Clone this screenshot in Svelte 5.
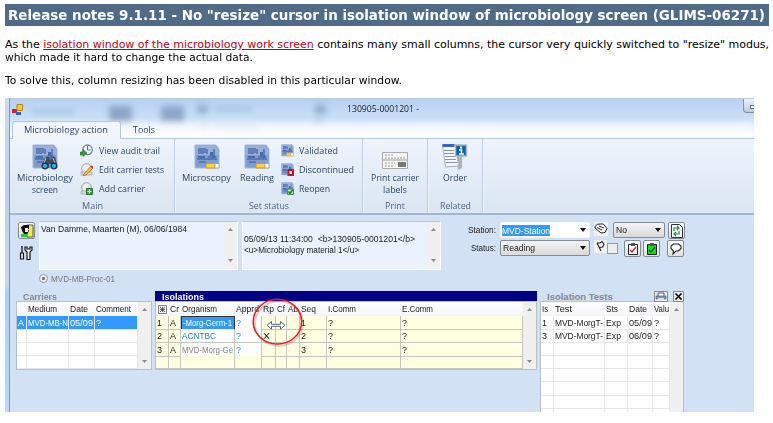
<script>
  function fit(node, width) {
    const natural = node.getBoundingClientRect().width;
    node.style.transform = `scaleX(${width / natural})`;
    node.style.marginRight = width - natural + 'px';
  }

  const carriers = [['A', 'MVD-MB-N', '05/09', '?'], [], [], []];
  const isolations = [
    ['1', 'A', '-Morg-Germ-1', '?', '', '', '', '1', '?', '?'],
    ['2', 'A', 'ACNTBC', '?', 'X', '', '', '2', '?', '?'],
    ['3', 'A', 'MVD-Morg-Ge', '?', '', '', '', '3', '?', '?'],
    []
  ];
  const cellWidths = { 'MVD-MB-N': 40, '05/09': 23, '06/09': 23, '-Morg-Germ-1': 49, ACNTBC: 34, 'MVD-Morg-Ge': 51, 'MVD-MorgT-': 48, Exp: 15, X: 7, A: 6, '?': 5 };
  const isoHead = [['Cr', 9], ['Organism', 35], ['Apprd', 23], ['Rp', 11], ['Cf', 8], ['Ab', 10], ['Seq', 15], ['I.Comm', 28], ['E.Comm', 31]];
  const tests = [['1', 'MVD-MorgT-', 'Exp', '05/09', '?'], ['3', 'MVD-MorgT-', 'Exp', '06/09', '?'], [], [], [], [], [], []];
  const testHead = [['Is', 6], ['Test', 17], ['Sts', 12], ['Date', 18], ['Valu', 15]];
  const cols = (n) => Array.from({ length: n }, (_, i) => i);
</script>

{#snippet t(text, w)}<span class="t" use:fit={w}>{text}</span>{/snippet}

{#snippet cell(text)}{#if text}{@render t(text, cellWidths[text] ?? 5)}{/if}{/snippet}

{#snippet plate(size, badge)}
  <svg width={size} height={size} viewBox="0 0 26 26">
    <path d="M1 1H22L25 5V24H1Z" fill="#7f9ccf" stroke="#a9b9da" />
    <path d="M2 2H21L24 5V11H2Z" fill="#a1b7e0" opacity=".75" />
    <path d="M5 4V10M7 4V10M9 4V10M11 4V9M13 5V10M17 9V12M20 5V14M3 15H23M5 18H12M14 13H22" stroke="#355899" stroke-width="1.1" />
    <path d="M16 8h3v4h-3zM4 12h7v2H4z" fill="#456cad" />
    {#if badge === 'yellow'}
      <path d="M12 19.500H21V24H12Z" fill="#ffd338" stroke="#d19b12" /><path d="M21 19.500H25V24H21Z" fill="#fff" stroke="#aaa" />
    {:else if badge === 'small'}
      <path d="M11 18H20V24H11Z" fill="#ffd338" stroke="#d19b12" /><path d="M20 18H25V24H20Z" fill="#fff" stroke="#aaa" />
    {:else if badge === 'stop'}
      <path d="M15 14H24V24H15Z" fill="#fff" stroke="#d80f1d" stroke-width="4" />
    {:else if badge === 'ok'}
      <path d="M13 14H25V25H13Z" fill="#b5dfad" stroke="#3d9742" stroke-width="2" /><path d="M15 19l3 4 6-8" fill="none" stroke="#218032" stroke-width="3" />
    {:else}
      <path d="M10 20L14 13H17L18 16H19L20 13H23L25 20V24H19V20H17V24H10Z" fill="#424b58" />
      <path d="M14 14l-2 5M21 14l2 5" stroke="#bdc4cc" /><circle cx="13" cy="22" r="2.8" fill="#29aee7" stroke="#233447" stroke-width="1.3" /><circle cx="22" cy="22" r="2.8" fill="#29aee7" stroke="#233447" stroke-width="1.3" />
    {/if}
  </svg>
{/snippet}

{#snippet scroll(h)}
  <div class="scroll"><svg width="13" height={h}><path d="M4 9l2.5-3L9 9z" fill="#8b8b8b" />{#if h < 90}<path d={`M4 ${h - 9}l2.5 3 2.5-3z`} fill="#8b8b8b" />{/if}</svg></div>
{/snippet}

{#snippet caret()}<svg class="caret" width="8" height="6"><path d="M1 1h6L4 5z" fill="#111" /></svg>{/snippet}

<main>
  <h1>{@render t('Release notes 9.1.11 - No "resize" cursor in isolation window of microbiology screen (GLIMS-06271)', 757)}</h1>
  <p class="just">As the <a href="#isolation">isolation window of the microbiology work screen</a> contains many small columns, the cursor very quickly switched to "resize" modus,</p>
  <p>{@render t('which made it hard to change the actual data.', 248)}</p>
  <p class="second">{@render t('To solve this, column resizing has been disabled in this particular window.', 397)}</p>

  <div class="shot">
    <div class="edge"></div>
    <div class="window">
      <header>
        <svg class="haze" width="744" height="40">
          <defs><filter id="b" x="-30%" y="-50%" width="160%" height="200%"><feGaussianBlur stdDeviation="3" /></filter></defs>
          <g filter="url(#b)">
            <path d="M99 7h23v16h-23zM151 7h23v16h-23z" fill="#53729d" opacity=".5" />
            <path d="M187 6h11v8h-11zM305 6h11v9h-11z" fill="#53729d" opacity=".45" />
            <path d="M205 8h37v4h-37zM204 26h45v4h-45zM22 11h42v4h-42zM304 20h10v4h-10z" fill="#7899bd" opacity=".4" />
            <path d="M190 24h8v7h-8z" fill="#c798a8" opacity=".35" />
            <path d="M0 25h744v18H0z" fill="#fff" opacity=".65" />
          </g>
        </svg>
        <div class="titlebar">
          <svg width="11" height="11"><path d="M0 5h5v4H0z" fill="#d72220" /><path d="M5 .5h5.500v6H5z" fill="#ffc72a" stroke="#b98410" /><path d="M4 8h5v3H4z" fill="#2667c5" /></svg>
          <div class="caption">{@render t('130905-0001201 -', 72)}</div>
          <div class="min"><i></i></div>
        </div>
        <div class="tabs"><div class="tab on">{@render t('Microbiology action', 84)}</div><div class="tab">{@render t('Tools', 22)}</div></div>
      </header>

      <section class="ribbon">
        <div class="group main">
          <div class="tools">
            <div class="big b1">{@render plate(26, 'glass')}{@render t('Microbiology', 56)}{@render t('screen', 26)}</div>
            <div class="list">
              <div><svg width="13" height="13"><circle cx="7.5" cy="5.8" r="4.8" fill="#f5f8ff" stroke="#7b8799" stroke-width="1.3" /><path d="M7.5 2v4h3" fill="none" stroke="#3d70c4" /><path d="M0 8h3V5.500l4 3.500-4 3.500V11H0z" fill="#329e35" stroke="#246b2a" stroke-width=".6" /></svg>{@render t('View audit trail', 61)}</div>
              <div><svg width="13" height="13"><circle cx="6.5" cy="5.5" r="4.8" fill="#eceded" stroke="#9ca0a4" /><path d="M1 9h11v3H1z" fill="#d9dcdf" stroke="#9ca0a4" stroke-width=".7" /><path d="M4 11l7-8 2 2-7 7-3 1z" fill="#ffba34" stroke="#a06e25" stroke-width=".7" /><path d="M11 3l2 2" stroke="#d73427" stroke-width="2" /></svg>{@render t('Edit carrier tests', 65)}</div>
              <div><svg width="13" height="13"><circle cx="6.5" cy="5.5" r="4.8" fill="#eceded" stroke="#9ca0a4" /><path d="M1 9h7v3H1z" fill="#d9dcdf" stroke="#9ca0a4" stroke-width=".7" /><path d="M6.5 6.5h6v6h-6z" fill="#3ea144" stroke="#226e2b" /><path d="M9.5 7.5v4M7.5 9.5h4" stroke="#fff" stroke-width="1.2" /></svg>{@render t('Add carrier', 46)}</div>
            </div>
          </div>
          <footer>{@render t('Main', 21)}</footer>
        </div>
        <div class="group status">
          <div class="tools">
            <div class="big b2">{@render plate(26, 'yellow')}{@render t('Microscopy', 49)}</div>
            <div class="big b3">{@render plate(26, 'yellow')}{@render t('Reading', 34)}</div>
            <div class="list">
              <div>{@render plate(13, 'small')}{@render t('Validated', 39)}</div>
              <div>{@render plate(13, 'stop')}{@render t('Discontinued', 55)}</div>
              <div>{@render plate(13, 'ok')}{@render t('Reopen', 31)}</div>
            </div>
          </div>
          <footer>{@render t('Set status', 40)}</footer>
        </div>
        <div class="group print">
          <div class="tools"><div class="big b4">
            <svg width="26" height="26"><path d="M.5 8.500h25v16H.5z" fill="#f6f6f3" stroke="#aaa" /><path d="M1 16h24" stroke="#999" /><path d="M3 11h8M3 14h12M15 14h8M3 19h10M3 22h8" stroke="#999" stroke-dasharray="2 1" /><path d="M17 18v5M19 18v5M21 18v5M23 18v5" stroke="#444" stroke-width="1.4" /></svg>
            {@render t('Print carrier', 48)}{@render t('labels', 24)}</div></div>
          <footer>{@render t('Print', 20)}</footer>
        </div>
        <div class="group related">
          <div class="tools"><div class="big b4">
            <svg width="26" height="26"><path d="M14 4l6-1v21l-4 2z" fill="#8c9299" opacity=".65" /><path d="M.5 1l13-1 3 22-13 1z" fill="#f5f7fa" stroke="#a9afb8" /><path d="M.5 0h12v3H.5z" fill="#3567c4" /><path d="M2 6.500h10M2 9.500h10M3 12.500h11M3 15.500h11M4 18.500h11" stroke="#8792a3" /><path d="M13.500 1h11v11h-11z" fill="#0765a7" stroke="#aeb8c2" stroke-width="1.5" /><circle cx="19" cy="3.500" r="1.200" fill="#fff" /><path d="M17 6h2.500v4M17 10h5" fill="none" stroke="#fff" stroke-width="1.500" /></svg>
            {@render t('Order', 24)}</div></div>
          <footer>{@render t('Related', 31)}</footer>
        </div>
      </section>

      <section class="body">
        <div class="form">
          <div class="side">
            <button aria-label="Patient"><svg width="14" height="14"><path d="M7 1h6v12H7z" fill="#f4ec42" stroke="#555" /><path d="M1 3l3-2h5v4H8l1 2-2 3H4L2 7z" fill="#111" /><path d="M5 4h3v4H5z" fill="#fff" /><path d="M1 10h6v3H1z" fill="#28c53b" /></svg></button>
            <svg width="14" height="15"><path d="M3 0v7" stroke="#151515" stroke-width="1.300" /><path d="M1.500 7h3v6h-3z" fill="#eee" stroke="#151515" stroke-width="1.200" /><path d="M6 1v3l2 2v7.500h3V6l2-2V1l-2 0v2H8V1z" fill="#eee" stroke="#151515" stroke-width="1.200" /></svg>
          </div>
          <div class="patient">
            <div class="area"><div class="txt">{@render t('Van Damme, Maarten (M), 06/06/1984', 146)}</div>{@render scroll(46)}</div>
            <div class="proc"><i></i>{@render t('MVD-MB-Proc-01', 64)}</div>
          </div>
          <div class="area material"><div class="txt"><div>{@render t('05/09/13 11:34:00  <b>130905-0001201</b>', 171)}</div><div>{@render t('<u>Microbiology material 1</u>', 115)}</div></div>{@render scroll(46)}</div>
          <div class="station">
            <div class="row">
              <label for="st">{@render t('Station:', 28)}</label>
              <div class="select white" id="st"><mark>{@render t('MVD-Station', 48)}</mark>{@render caret()}</div>
              <svg class="ico" width="14" height="14"><path fill="#f1f1f1" d="M0 0h14v14H0z" /><path d="M1 4.500q2-3 5-2.500 4-1 5 2l2 2.500-2 4-4 .5-6-5zM3 5.500l5 2.500M5 4l5 2" fill="#fff" stroke="#222" stroke-width="1" /></svg>
              <div class="select no">{@render t('No', 11)}{@render caret()}</div>
              <button class="ref" aria-label="Refresh"><svg width="13" height="14"><path d="M1.500.5h8l3 3v10h-11z" fill="#fff" stroke="#333" /><path d="M4 7V4h5M7 2l2 2-2 2M9 7v3H4M6 8l-2 2 2 2" fill="none" stroke="#169331" stroke-width="1.2" /></svg></button>
            </div>
            <div class="row r2">
              <label for="su">{@render t('Status:', 25)}</label>
              <div class="select" id="su">{@render t('Reading', 32)}{@render caret()}</div>
              <svg class="ico" width="13" height="13"><path fill="#f1f1f1" d="M0 0h13v13H0z" /><path d="M3 3l4 8M3 3l3 0 2-1.500 2 3-1.500 2.500-3 .5" fill="none" stroke="#222" stroke-width="1.1" /></svg>
              <i class="check"></i>
              <button class="c1" aria-label="Check"><svg width="12" height="13"><path d="M1.500 2.500h9v10h-9z" fill="#fff" stroke="#222" /><path d="M4 1h4v3H4z" fill="#555" /><path d="M3 8l2 2 4-5" fill="none" stroke="#d22" stroke-width="1.4" /></svg></button>
              <button class="c2" aria-label="Validate"><svg width="12" height="13"><path d="M1.500 2.500h9v10h-9z" fill="#0ae21c" stroke="#222" /><path d="M4 1h4v3H4z" fill="#555" /><path d="M3 8l2 2 4-5" fill="none" stroke="#115018" stroke-width="1.4" /></svg></button>
              <button class="c3" aria-label="Comment"><svg width="14" height="13"><path d="M4.500 2h5l2.500 2v2.500L9.500 9H7l-3 3 .5-3L2 6.500V4z" fill="#fff" stroke="#222" stroke-width="1.1" /></svg></button>
            </div>
          </div>
        </div>

        <div class="grids">
          <div class="carriers">
            <div class="gt">{@render t('Carriers', 34)}</div>
            <div class="frame">
              <div class="rows">
                <div class="r head"><b></b><b>{@render t('Medium', 29)}</b><b>{@render t('Date', 18)}</b><b>{@render t('Comment', 35)}</b></div>
                {#each carriers as c, i}<div class="r" class:sel={i === 0}>{#each cols(4) as j}<b>{@render cell(c[j])}</b>{/each}</div>{/each}
              </div>
              {@render scroll(67)}
            </div>
          </div>

          <div class="iso">
            <div class="gt navy">{@render t('Isolations', 42)}</div>
            <div class="frame">
              <div class="rows">
                <div class="r head"><b><svg width="9" height="9"><path d="M.5.5h8v8h-8z" fill="#eee" stroke="#777" stroke-width=".9" /><path d="M2 2l5 5M7 2L2 7M4.500 2v5M2 4.500h5" stroke="#555" stroke-width=".9" /></svg></b>{#each isoHead as [h, w]}<b>{@render t(h, w)}</b>{/each}</div>
                {#each isolations as c, i}<div class="r d{i}">{#each cols(10) as j}<b class="k{j}">{@render cell(c[j])}</b>{/each}</div>{/each}
              </div>
              {@render scroll(67)}
            </div>
          </div>

          <div class="tests">
            <div class="gt"><span>{@render t('Isolation Tests', 66)}</span>
              <svg class="pr" width="14" height="11"><path d="M.5.5h13v10H.5z" fill="#eef0f2" stroke="#888" /><path d="M4 5V2h6v3" fill="#fff" stroke="#557" /><path d="M2 5h10v3H2z" fill="#8298b8" stroke="#456" stroke-width=".6" /><path d="M4 7h6v2H4z" fill="#cfe2fa" /></svg>
              <svg width="11" height="11"><path d="M.5.5h10v10H.5z" fill="#eee" stroke="#888" /><path d="M2.500 2.500l6 6M8.500 2.500l-6 6" stroke="#000" stroke-width="1.700" /></svg>
            </div>
            <div class="frame">
              <div class="rows">
                <div class="r head">{#each testHead as [h, w]}<b>{@render t(h, w)}</b>{/each}</div>
                {#each tests as c}<div class="r">{#each cols(5) as j}<b>{@render cell(c[j])}</b>{/each}</div>{/each}
              </div>
              {@render scroll(123)}
            </div>
          </div>
        </div>
      </section>
    </div>

    <svg class="marker" width="60" height="56" viewBox="247 294 60 56">
      <ellipse cx="279" cy="323.500" rx="24" ry="22.200" fill="none" stroke="#555" stroke-width="2" opacity=".25" />
      <ellipse cx="277.400" cy="321.700" rx="24.200" ry="22.400" fill="none" stroke="#f01820" stroke-width="1.500" />
      <path d="M267 325.300l4.500-3.800v2.800h9v-2.800l4.500 3.800-4.500 3.800v-2.800h-9v2.800z" fill="#fff" stroke="#4b5370" stroke-width=".9" />
    </svg>
  </div>
</main>

<style>
  :global(body) { background: #fff; }
  main { width: 764px; height: 423px; box-sizing: border-box; padding-top: 4px; margin-left: 5px; overflow: hidden; font-family: "DejaVu Sans", Verdana, sans-serif; color: #000; }
  svg { display: block; flex: none; }
  .t { display: inline-block; white-space: pre; flex: none; transform-origin: 0 50%; }
  h1 { margin: 0 0 12px; height: 22px; line-height: 22px; padding-left: 3px; background: #506b87; color: #fff; font-size: 14px; font-weight: bold; white-space: nowrap; overflow: hidden; }
  p { margin: 0; font-size: 11px; line-height: 13px; height: 13px; white-space: nowrap; }
  .just { white-space: normal; text-align: justify; text-align-last: justify; letter-spacing: -.03px; }
  p.second { margin-top: 10px; }
  a { color: #c00018; }
  .shot { position: relative; display: flex; width: 749px; height: 314px; margin-top: 11px; overflow: hidden; font: 9.5px/12px "Liberation Sans", Arial, sans-serif; color: #1b1b1b; }
  .edge { width: 4px; border-right: 1px solid #8097b5; background: linear-gradient(#c9dcf2, #bdd2ea 30%, #c5d8ee 59%, #a8d4f8 62%, #b8daf5); }
  .window { width: 744px; display: flex; flex-direction: column; }
  header { position: relative; height: 41px; background: linear-gradient(#b5d2f2, #c8def5 45%, #f5f9fd 90%); border-top: 1px solid #bdc9d8; box-sizing: border-box; font-family: "Open Sans", "Noto Sans", sans-serif; }
  .haze { position: absolute; left: 0; top: 0; }
  .titlebar { position: relative; display: flex; height: 22px; padding-left: 2px; }
  .titlebar > svg { margin-top: 5px; }
  .caption { margin-left: 324px; margin-top: 4px; color: #222; }
  .min { margin-left: auto; width: 10px; height: 13px; border: 1px solid #8393a7; border-width: 0 0 1px 1px; border-radius: 0 0 0 4px; background: linear-gradient(#eef4fb, #bacbdf); }
  .min i { display: block; width: 4px; height: 2px; margin: 6px 0 0 6px; border: 1px solid #626b78; border-right: 0; background: #fff; }
  .tabs { position: relative; display: flex; height: 18px; border-bottom: 1px solid #b2c7de; box-sizing: border-box; }
  .tab { height: 18px; padding: 3px 12px 0; color: #2f4666; box-sizing: border-box; }
  .on { margin-left: 2px; width: 109px; padding: 2px 11px 0; border: 1px solid #b2c7de; border-bottom: 0; border-radius: 3px 3px 0 0; background: #f1f6fd; }
  .ribbon { display: flex; box-sizing: border-box; height: 76px; border-bottom: 2px solid #a3b7cf; background: linear-gradient(#edf4fc, #e5edf8 42%, #dae6f2); color: #2f4666; font-family: "Open Sans", "Noto Sans", sans-serif; }
  .group { box-sizing: border-box; border-right: 1px solid #bccde0; box-shadow: 1px 0 #eff5fb; display: flex; flex-direction: column; }
  .main { width: 165px; } .status { width: 188px; } .print { width: 65px; } .related { width: 55px; }
  .tools { display: flex; height: 61px; }
  .group footer { text-align: center; color: #506582; line-height: 12px; height: 13px; }
  .big { display: flex; flex-direction: column; align-items: center; padding-top: 5px; box-sizing: border-box; line-height: 12px; }
  .big svg { margin-bottom: 2px; }
  .b1 { width: 70px; } .b2 { width: 63px; } .b3 { width: 38px; } .b4 { width: 100%; }
  .status .list { margin-left: 5px; }
  .list { display: flex; flex-direction: column; padding-top: 2px; }
  .list > div { display: flex; gap: 5px; align-items: center; height: 19px; }
  .main .list > div { gap: 6px; }
  .body { height: 197px; background: #d3e1f5; display: flex; flex-direction: column; overflow: hidden; }
  .form { display: flex; flex: none; height: 76px; box-sizing: border-box; padding: 6px 0 0 8px; }
  .side { width: 21px; padding-top: 1px; }
  .side > svg { margin: 7px 0 0 1px; }
  button { display: flex; align-items: center; justify-content: center; flex: none; width: 17px; height: 17px; padding: 0; border: 1px solid #858b92; border-radius: 2px; background: linear-gradient(#fff, #e0e0e0); box-sizing: border-box; }
  .area { display: flex; justify-content: space-between; box-sizing: border-box; width: 199px; height: 49px; border: 1px solid #fafcff; border-top-color: #bcc4d0; background: #eaf3fd; }
  .txt { padding: 1px 0 0 1px; }
  .scroll { width: 13px; flex: none; background: #f0f0f1; }
  .material { margin-left: 4px; }
  .material .txt { padding-top: 12px; line-height: 10.5px; }
  .material .txt div { height: 10.5px; }
  .proc { display: flex; align-items: center; gap: 3px; height: 17px; color: #777; }
  .proc i { width: 7px; height: 7px; border: 1px solid #999; border-radius: 50%; background: radial-gradient(#777 0 25%, #eee 40%); }
  .station { margin-left: 27px; }
  .row { display: flex; height: 18px; padding-top: 1px; box-sizing: border-box; }
  .row label { width: 28px; text-align: right; line-height: 16px; }
  .select { display: flex; align-items: center; justify-content: space-between; box-sizing: border-box; width: 90px; height: 16px; margin-left: 4px; padding: 0 2px; border: 1px solid #858b92; border-radius: 2px; background: linear-gradient(#f4f4f4, #d9d9d9); }
  .white { background: #fff; border-color: #f4f8ff; padding-left: 1px; }
  mark { background: #3399ff; color: #fff; height: 11px; line-height: 11px; display: flex; }
  .ico { margin-left: 4px; }
  .no { width: 52px; margin-left: 5px; }
  .ref { margin-left: 3px; }
  .check { width: 9px; height: 9px; border: 1px solid #999; background: #eee; margin-top: 3px; }
  .c1 { margin-left: 6px; } .c2 { margin-left: 2px; } .c3 { margin-left: 7px; }
  .grids { display: flex; flex: none; align-items: flex-start; padding-left: 6px; }
  .carriers { width: 136px; } .iso { width: 382px; margin-left: 3px; } .tests { width: 144px; margin-left: 3px; }
  .gt { height: 10px; padding-left: 7px; line-height: 11px; font-weight: bold; color: #83878e; display: flex; }
  .navy { background: #000084; color: #fff; }
  .tests .gt span { width: 66px; }
  .tests .pr { margin: 0 5px 0 41px; }
  .frame { display: flex; box-sizing: border-box; height: 69px; border: 1px solid #b9bfc8; background: #fff; }
  .tests .frame { height: 125px; }
  .rows { flex: 1; min-width: 0; }
  .r { display: grid; height: 13.25px; box-sizing: border-box; }
  .head { height: 14px; }
  .carriers .r { grid-template-columns: 10px 42px 26px 1fr; }
  .iso .r { grid-template-columns: 13px 12px 54px 27px 14px 11px 13px 27px 74px 1fr; }
  .tests .r { grid-template-columns: 13px 51px 23px 25px 1fr; }
  .r b { font-weight: normal; display: flex; white-space: nowrap; padding-left: 1px; line-height: 13px; border-right: 1px solid #e7e7e9; border-bottom: 1px solid #e7e7e9; min-width: 0; box-sizing: border-box; }
  .r.head b { border-color: transparent; line-height: 14px; }
  .r.head { background: linear-gradient(#fff, #f4f5f7); }
  .head svg { margin: 3px 0 0 1px; }
  .sel { background: #3399ff; color: #fff; }
  .iso .r:not(.head) { background: #ffffe1; }
  .iso .r:not(.head) b { border-color: #c5c5bd; }
  .iso .k3 { color: #2e93cb; background: #fff; }
  .iso .k2 { background: #fff; color: #2386b3; }
  .iso .d2 .k2 { color: #858585; }
  .iso .r.d0 .k2 { background: #3399ff; color: #fff; border: 1px solid #333; line-height: 11px; }
  .iso .d3 .k2, .iso .d3 .k3 { background: #ffffe1; }
  .marker { position: absolute; left: 242px; top: 196px; }
</style>
